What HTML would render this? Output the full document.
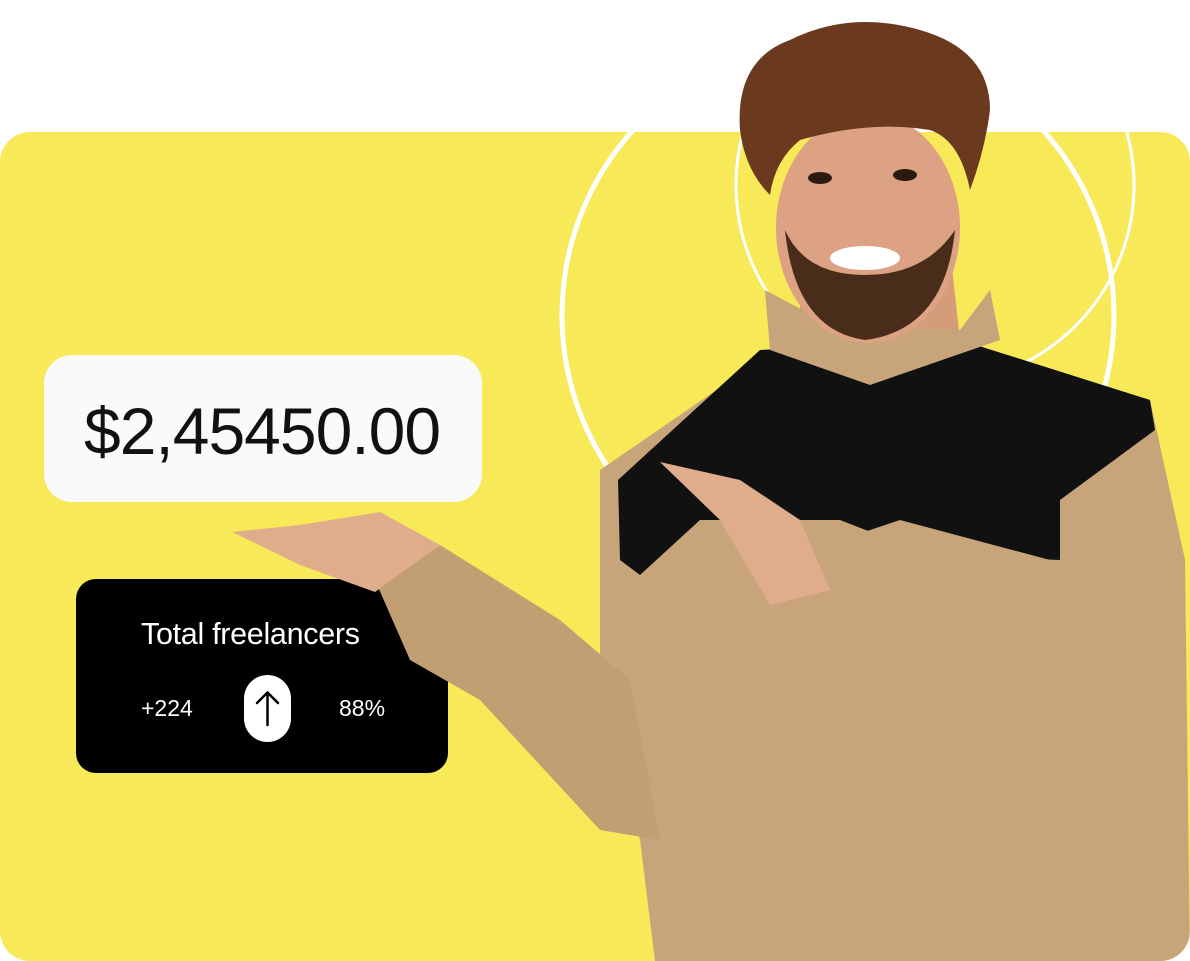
<!DOCTYPE html>
<html><head><meta charset="utf-8"><style>
html,body{margin:0;padding:0;background:#fff;width:1190px;height:961px;overflow:hidden;position:relative;font-family:"Liberation Sans",sans-serif}
.bg{position:absolute;left:0;top:132px;width:1190px;height:829px;background:#f7e957;border-radius:30px}
.card1{position:absolute;left:44px;top:355px;width:438px;height:147px;background:#fafafa;border-radius:28px;z-index:5}
.card1 span{position:absolute;left:40px;top:38px;font-size:66px;color:#111;letter-spacing:-1px}
.card2{position:absolute;left:76px;top:579px;width:372px;height:194px;background:#000;border-radius:20px;color:#fff}
.t{position:absolute;left:65px;top:38px;font-size:30.5px;letter-spacing:-0.3px}
.a{position:absolute;left:65px;top:116px;font-size:23px}
.b{position:absolute;left:263px;top:116px;font-size:23px}
.pill{position:absolute;left:168px;top:96px;width:47px;height:67px;background:#fff;border-radius:24px}
svg.p{position:absolute;left:0;top:0;z-index:3}
</style></head><body>
<div class="bg"></div>
<svg class="p" width="1190" height="961" style="z-index:1">
<circle cx="838" cy="315" r="276" fill="none" stroke="#fff" stroke-width="5"/>
<circle cx="935" cy="185" r="199" fill="none" stroke="#fff" stroke-width="3"/>
</svg>
<div class="card2"><div class="t">Total freelancers</div><div class="a">+224</div>
<div class="pill"><svg width="47" height="67"><path d="M23.5 50V18M13 28L23.5 17.5L34 28" fill="none" stroke="#000" stroke-width="2.5" stroke-linecap="round" stroke-linejoin="round"/></svg></div>
<div class="b">88%</div></div>
<svg class="p" width="1190" height="961">
<defs><clipPath id="c"><rect x="0" y="0" width="1190" height="961" rx="30"/></clipPath></defs>
<g clip-path="url(#c)">
<polygon points="600,470 760,360 960,340 1150,400 1185,560 1190,961 655,961 640,840 600,700" fill="#c8a47a"/>
<polygon points="375,580 440,545 560,620 630,680 660,840 600,830 480,700 410,660" fill="#c29e73"/>
<polygon points="232,532 300,525 380,512 440,545 375,592 300,565" fill="#e0ad8c"/>
<polygon points="618,480 760,350 960,340 1150,400 1155,430 1060,500 1060,560 930,555 840,520 700,520 640,575 620,560" fill="#111"/>
<polygon points="780,560 900,520 1050,560 1150,640 1140,720 1060,700 920,680 830,620" fill="#c8a47a"/>
<polygon points="660,462 740,480 800,520 830,590 770,605 720,520" fill="#e0ad8c"/>
<polygon points="800,250 950,250 960,340 870,370 800,340" fill="#d49c78"/>
<polygon points="765,290 840,330 960,330 990,290 1000,340 870,385 770,350" fill="#c8a47a"/>
<ellipse cx="868" cy="228" rx="92" ry="115" fill="#dca283"/>
<path d="M785 230 Q795 330 865 340 Q945 330 955 230 Q925 275 865 275 Q805 275 785 230Z" fill="#4a2c1a"/>
<ellipse cx="865" cy="258" rx="35" ry="12" fill="#fff"/>
<path d="M740 130 Q735 60 790 40 Q850 10 920 30 Q990 50 990 110 Q985 150 970 190 Q960 140 930 130 Q870 120 800 140 Q775 160 770 195 Q745 170 740 130Z" fill="#6b3a1e"/>
<ellipse cx="820" cy="178" rx="12" ry="6" fill="#2a1a10"/>
<ellipse cx="905" cy="175" rx="12" ry="6" fill="#2a1a10"/>
</g>
</svg>
<div class="card1"><span>$2,45450.00</span></div>
</body></html>
